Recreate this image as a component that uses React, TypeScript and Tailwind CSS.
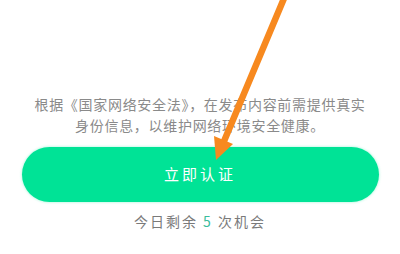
export default function App() {
  return (
    <div
      className="relative h-[254px] w-[400px] overflow-hidden bg-white"
      style={{ fontFamily: '"Noto Sans CJK SC", "Noto Sans", sans-serif' }}
    >
      <div className="flex flex-col items-center pt-[94px]">
        <p className="text-center text-[14px] leading-[21px] tracking-[0.7px] text-[#8a8a8a]">
          根据《国家网络安全法》，在发布内容前需提供真实
          <br />
          身份信息，以维护网络环境安全健康。
        </p>
        <button
          type="button"
          className="mt-[11px] flex h-[55px] w-[357px] items-center justify-center rounded-full bg-[#00e396] text-[15px] tracking-[3px] text-white shadow-[0_0_3px_rgba(0,227,150,0.4)]"
        >
          立即认证
        </button>
        <div className="mt-[9px] text-[14px] leading-[20px] tracking-[2px] text-[#7a7a7a]">
          今日剩余 <span className="text-[#3bbd9c]">5</span> 次机会
        </div>
      </div>

      {/* 스크린샷 위 주석 화살표 */}
      <svg
        className="pointer-events-none absolute left-0 top-0"
        width="400"
        height="254"
        viewBox="0 0 400 254"
      >
        <line
          x1="285"
          y1="-4"
          x2="222"
          y2="146"
          stroke="#f7891f"
          strokeWidth="6.5"
          strokeLinecap="round"
        />
        <polygon points="216,160 233,144 214,136" fill="#f7891f" />
      </svg>
    </div>
  );
}
